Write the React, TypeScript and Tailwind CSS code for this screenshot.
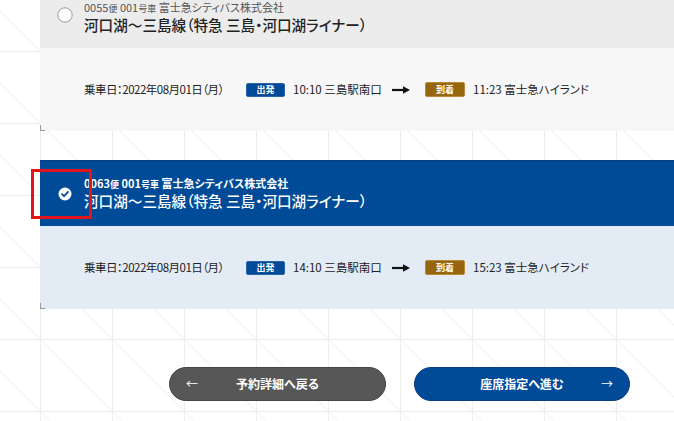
import React from "react";

function Radio({ checked }: { checked: boolean }) {
  if (checked) {
    return (
      <svg width="14" height="14" viewBox="0 0 14 14" className="shrink-0">
        <circle cx="7" cy="7" r="6.5" fill="#ffffff" />
        <path d="M4 7.2L6.1 9.2L10 4.9" stroke="#004a97" strokeWidth="1.8" fill="none" strokeLinecap="round" strokeLinejoin="round" />
      </svg>
    );
  }
  return (
    <svg width="16" height="16" viewBox="0 0 16 16" className="shrink-0">
      <circle cx="8" cy="8" r="7.2" fill="#ffffff" stroke="#9a9a9a" strokeWidth="1" />
    </svg>
  );
}

function BigArrow() {
  return (
    <svg width="18" height="10" viewBox="0 0 18 10" className="shrink-0">
      <path d="M0 5H13" stroke="#111" strokeWidth="2.2" />
      <path d="M11 1.2L18 5L11 8.8Z" fill="#111" />
    </svg>
  );
}

type CardProps = {
  bin: string;
  selected: boolean;
  dep: string;
  arr: string;
  className?: string;
};

function Card({ bin, selected, dep, arr, className }: CardProps) {
  return (
    <div className={"relative " + (className ?? "")}>
      <div
        className={
          "h-[66px] flex items-center pl-[17px] " +
          (selected ? "bg-[#004b98] border-t border-[#0b3f80]" : "bg-[#ececec]")
        }
      >
        <div className={selected ? "w-[16px] flex justify-center" : ""}>
          <Radio checked={selected} />
        </div>
        <div className={"ml-[11px] flex flex-col " + (selected ? "" : "translate-y-[3px]")}>
          <div
            className={
              "h-[14px] leading-[14px] text-[11px] whitespace-nowrap " +
              (selected ? "text-white font-bold" : "text-[#555]")
            }
          >
            {bin}
            <span className="text-[9px]">便</span> 001
            <span className="text-[9px]">号車</span> 富士急シティバス株式会社
          </div>
          <div
            className={
              "h-[22px] leading-[22px] text-[14.6px] font-medium whitespace-nowrap " +
              (selected ? "text-white" : "text-[#222]")
            }
          >
            河口湖～三島線（特急 三島・河口湖ライナー）
          </div>
        </div>
      </div>
      <div
        className={
          "h-[83px] flex items-center pl-[44px] text-[11.5px] text-[#222] whitespace-nowrap " +
          (selected ? "bg-[#e3ebf4]" : "bg-[#f7f7f7]")
        }
      >
        <span className="w-[162px] tracking-[-0.5px]">乗車日：2022年08月01日（月）</span>
        <span className="w-[39px] h-[14px] rounded-[2px] bg-[#004a97] border border-[#2a64a8] text-white text-[9px] font-bold flex items-center justify-center leading-none">
          出発
        </span>
        <span className="ml-[8px] w-[99px]">{dep} 三島駅南口</span>
        <span className="flex items-center">
          <BigArrow />
        </span>
        <span className="ml-[15px] w-[40px] h-[15px] rounded-[2px] bg-[#98650f] border border-[#b8893a] text-white text-[9px] font-bold flex items-center justify-center leading-none">
          到着
        </span>
        <span className="ml-[8px]">{arr} 富士急ハイランド</span>
      </div>
      <div className="absolute left-0 bottom-0 w-[5px] h-[6px] border-l border-b border-[#9a9a9a]" />
    </div>
  );
}

export default function App() {
  return (
    <div className="relative w-[674px] h-[421px] overflow-hidden bg-white font-['Noto_Sans_CJK_JP','Noto_Sans',sans-serif] [font-feature-settings:'palt']">
      <svg className="absolute inset-0 w-full h-full" width="674" height="421">
        <defs>
          <pattern id="bgpat" x="40" y="51" width="72" height="72" patternUnits="userSpaceOnUse">
            <path d="M0 0.5H72 M0.5 0V72" stroke="#eeeeee" strokeWidth="1" fill="none" />
            <path d="M0 0L72 72" stroke="#efefef" strokeWidth="1" fill="none" />
          </pattern>
        </defs>
        <rect width="100%" height="100%" fill="url(#bgpat)" />
      </svg>

      <div className="relative pl-[40px] mt-[-18px] w-[720px]">
        <Card bin="0055" selected={false} dep="10:10" arr="11:23" />
        <Card bin="0063" selected={true} dep="14:10" arr="15:23" className="mt-[29px]" />
      </div>

      <div className="relative mt-[58px] flex gap-[28px] pl-[169px]">
        <button className="w-[217px] h-[34px] rounded-full bg-[#575757] border border-[#444] text-white text-[12px] font-bold grid grid-cols-[1fr_auto_1fr] items-center px-[16px]">
          <span className="justify-self-start text-[12px] font-normal">←</span>
          <span>予約詳細へ戻る</span>
          <span />
        </button>
        <button className="w-[216px] h-[34px] rounded-full bg-[#004a97] border border-[#0b3f80] text-white text-[12px] font-bold grid grid-cols-[1fr_auto_1fr] items-center px-[16px]">
          <span />
          <span>座席指定へ進む</span>
          <span className="justify-self-end text-[12px] font-normal">→</span>
        </button>
      </div>

      <div className="absolute left-[31px] top-[169px] w-[61px] h-[50px] border-[3px] border-[#e3141b]" />
    </div>
  );
}
